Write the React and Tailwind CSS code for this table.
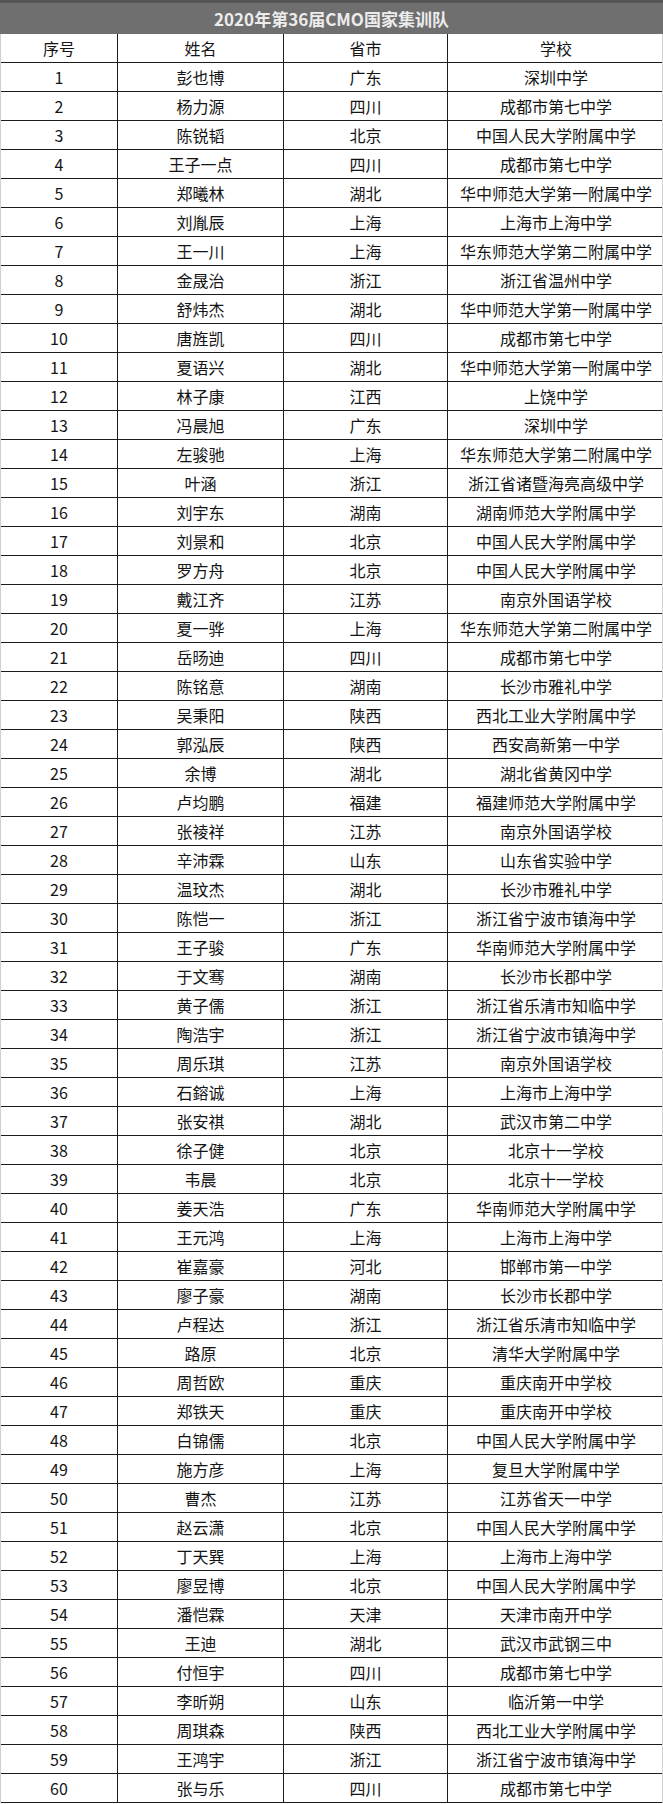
const rows = [
  ["1","彭也博","广东","深圳中学"],
  ["2","杨力源","四川","成都市第七中学"],
  ["3","陈锐韬","北京","中国人民大学附属中学"],
  ["4","王子一点","四川","成都市第七中学"],
  ["5","郑曦林","湖北","华中师范大学第一附属中学"],
  ["6","刘胤辰","上海","上海市上海中学"],
  ["7","王一川","上海","华东师范大学第二附属中学"],
  ["8","金晟治","浙江","浙江省温州中学"],
  ["9","舒炜杰","湖北","华中师范大学第一附属中学"],
  ["10","唐旌凯","四川","成都市第七中学"],
  ["11","夏语兴","湖北","华中师范大学第一附属中学"],
  ["12","林子康","江西","上饶中学"],
  ["13","冯晨旭","广东","深圳中学"],
  ["14","左骏驰","上海","华东师范大学第二附属中学"],
  ["15","叶涵","浙江","浙江省诸暨海亮高级中学"],
  ["16","刘宇东","湖南","湖南师范大学附属中学"],
  ["17","刘景和","北京","中国人民大学附属中学"],
  ["18","罗方舟","北京","中国人民大学附属中学"],
  ["19","戴江齐","江苏","南京外国语学校"],
  ["20","夏一骅","上海","华东师范大学第二附属中学"],
  ["21","岳旸迪","四川","成都市第七中学"],
  ["22","陈铭意","湖南","长沙市雅礼中学"],
  ["23","吴秉阳","陕西","西北工业大学附属中学"],
  ["24","郭泓辰","陕西","西安高新第一中学"],
  ["25","余博","湖北","湖北省黄冈中学"],
  ["26","卢均鹏","福建","福建师范大学附属中学"],
  ["27","张祾祥","江苏","南京外国语学校"],
  ["28","辛沛霖","山东","山东省实验中学"],
  ["29","温玟杰","湖北","长沙市雅礼中学"],
  ["30","陈恺一","浙江","浙江省宁波市镇海中学"],
  ["31","王子骏","广东","华南师范大学附属中学"],
  ["32","于文骞","湖南","长沙市长郡中学"],
  ["33","黄子儒","浙江","浙江省乐清市知临中学"],
  ["34","陶浩宇","浙江","浙江省宁波市镇海中学"],
  ["35","周乐琪","江苏","南京外国语学校"],
  ["36","石鎔诚","上海","上海市上海中学"],
  ["37","张安祺","湖北","武汉市第二中学"],
  ["38","徐子健","北京","北京十一学校"],
  ["39","韦晨","北京","北京十一学校"],
  ["40","姜天浩","广东","华南师范大学附属中学"],
  ["41","王元鸿","上海","上海市上海中学"],
  ["42","崔嘉豪","河北","邯郸市第一中学"],
  ["43","廖子豪","湖南","长沙市长郡中学"],
  ["44","卢程达","浙江","浙江省乐清市知临中学"],
  ["45","路原","北京","清华大学附属中学"],
  ["46","周哲欧","重庆","重庆南开中学校"],
  ["47","郑铁天","重庆","重庆南开中学校"],
  ["48","白锦儒","北京","中国人民大学附属中学"],
  ["49","施方彦","上海","复旦大学附属中学"],
  ["50","曹杰","江苏","江苏省天一中学"],
  ["51","赵云潇","北京","中国人民大学附属中学"],
  ["52","丁天巽","上海","上海市上海中学"],
  ["53","廖昱博","北京","中国人民大学附属中学"],
  ["54","潘恺霖","天津","天津市南开中学"],
  ["55","王迪","湖北","武汉市武钢三中"],
  ["56","付恒宇","四川","成都市第七中学"],
  ["57","李昕朔","山东","临沂第一中学"],
  ["58","周琪森","陕西","西北工业大学附属中学"],
  ["59","王鸿宇","浙江","浙江省宁波市镇海中学"],
  ["60","张与乐","四川","成都市第七中学"],
];

function Row({ cells }) {
  return (
    <div className="grid grid-cols-[117px_166px_164px_216px] h-[29px] border-b border-[#1c1c1c]">
      <div className="flex items-center justify-center border-r border-[#1c1c1c]">{cells[0]}</div>
      <div className="flex items-center justify-center border-r border-[#1c1c1c]">{cells[1]}</div>
      <div className="flex items-center justify-center border-r border-[#1c1c1c]">{cells[2]}</div>
      <div className="flex items-center justify-center">{cells[3]}</div>
    </div>
  );
}

export default function App() {
  return (
    <div
      className="w-[663px] bg-white text-[16px] leading-none text-[#141414]"
      style={{ fontFamily: '"Noto Sans CJK SC", "Noto Sans", sans-serif' }}
    >
      <div className="h-[34px] bg-[#6f6f6f] border-t-[3px] border-[#555555] flex items-center justify-center">
        <span className="text-[17px] font-bold text-[#ececec] tracking-[0px]">2020年第36届CMO国家集训队</span>
      </div>
      <div className="border-x border-[#cfcfcf]">
        <Row cells={["序号", "姓名", "省市", "学校"]} />
        {rows.map((r) => (
          <Row key={r[0]} cells={r} />
        ))}
      </div>
    </div>
  );
}
